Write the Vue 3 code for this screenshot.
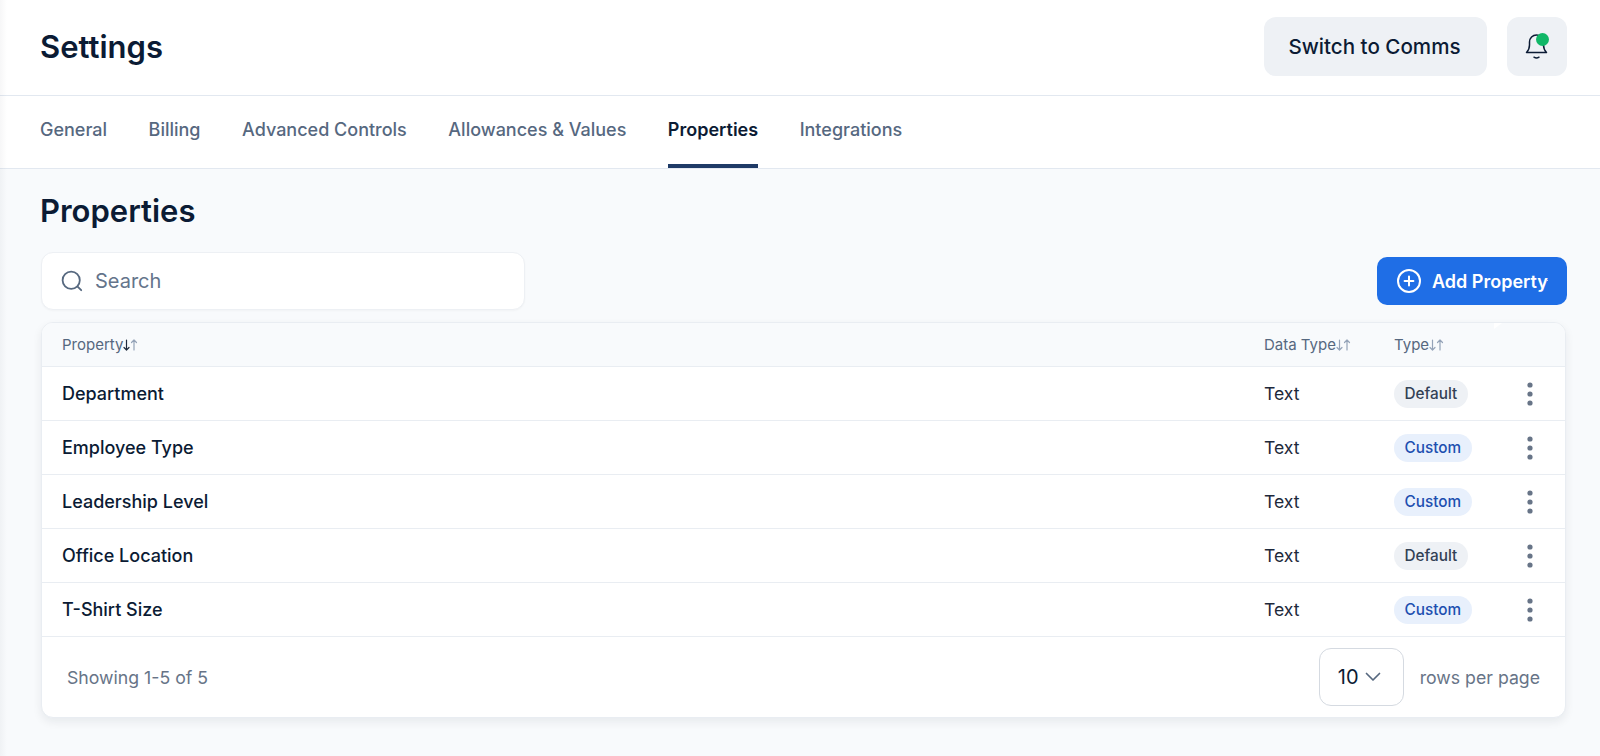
<script setup>
const tabs = ['General', 'Billing', 'Advanced Controls', 'Allowances & Values', 'Properties', 'Integrations']
const rows = [
  { name: 'Department', data: 'Text', type: 'Default' },
  { name: 'Employee Type', data: 'Text', type: 'Custom' },
  { name: 'Leadership Level', data: 'Text', type: 'Custom' },
  { name: 'Office Location', data: 'Text', type: 'Default' },
  { name: 'T-Shirt Size', data: 'Text', type: 'Custom' },
]
const cols = [
  { label: 'Property', cls: 'c-name', active: true },
  { label: 'Data Type', cls: 'c-data' },
  { label: 'Type', cls: 'c-type' },
]
</script>

<template>
  <div class="page">
    <div class="edge"></div>
    <header class="top">
      <h1>Settings</h1>
      <div class="top-actions">
        <button class="btn-soft">Switch to Comms</button>
        <button class="btn-bell" aria-label="Notifications">
          <svg width="24" height="28" viewBox="0 0 24 28" fill="none" stroke="#0b1b34" stroke-width="1.5" stroke-linecap="round" stroke-linejoin="round">
            <path d="M1.5 19.5c2-2 3-4 3-7.5V9a7 7 0 0 1 14 0v3c0 3.5 1 5.5 3 7.5z" />
            <path d="M9 24.2c1.5 1 3.5 1 5 0" />
          </svg>
          <span class="dot"></span>
        </button>
      </div>
    </header>

    <nav class="tabs">
      <a v-for="t in tabs" :key="t" class="tab" :class="{ active: t === 'Properties' }">{{ t }}</a>
    </nav>

    <main class="content">
      <h2>Properties</h2>
      <div class="toolbar">
        <label class="search">
          <svg width="24" height="24" viewBox="0 0 24 24" fill="none" stroke="#56687f" stroke-width="1.8" stroke-linecap="round">
            <circle cx="11.2" cy="11.2" r="8.6" />
            <path d="M17.6 17.6l3.6 3.6" />
          </svg>
          <span>Search</span>
        </label>
        <button class="btn-primary">
          <svg width="26" height="26" viewBox="0 0 26 26" fill="none" stroke="#fff" stroke-width="2" stroke-linecap="round">
            <circle cx="13" cy="13" r="11" />
            <path d="M13 8.6v8.8M8.6 13h8.8" />
          </svg>
          <span>Add Property</span>
          <i class="speck"></i>
        </button>
      </div>

      <section class="card">
        <div class="row head">
          <i class="notch"></i>
          <div v-for="c in cols" :key="c.label" class="cell" :class="c.cls">
            <span class="head-label">{{ c.label }}<svg class="arrows" width="15" height="12" viewBox="0 0 15 12" fill="none" stroke-width="1.2" stroke-linecap="round" stroke-linejoin="round">
              <path :stroke="c.active ? '#1e293b' : '#94a3b8'" d="M3.5 1v10M1 8.5L3.5 11L6 8.5" />
              <path stroke="#94a3b8" d="M11 11V1M8.5 3.5L11 1l2.5 2.5" />
            </svg></span>
          </div>
          <div class="cell c-menu"></div>
        </div>
        <div v-for="r in rows" :key="r.name" class="row body">
          <div class="cell c-name name">{{ r.name }}</div>
          <div class="cell c-data">{{ r.data }}</div>
          <div class="cell c-type">
            <span class="pill" :class="r.type.toLowerCase()">{{ r.type }}</span>
          </div>
          <div class="cell c-menu">
            <svg width="6" height="24" viewBox="0 0 6 24" fill="#677487">
              <circle cx="3" cy="3" r="2.6" /><circle cx="3" cy="12" r="2.6" /><circle cx="3" cy="21" r="2.6" />
            </svg>
          </div>
        </div>
        <footer class="foot">
          <span>Showing 1-5 of 5</span>
          <div class="pager">
            <div class="select">
              <span>10</span>
              <svg width="16" height="10" viewBox="0 0 16 10" fill="none" stroke="#56687f" stroke-width="1.7" stroke-linecap="round" stroke-linejoin="round">
                <path d="M1.5 1.5L8 8l6.5-6.5" />
              </svg>
            </div>
            <span>rows per page</span>
          </div>
        </footer>
      </section>
    </main>
  </div>
</template>

<style>
html, body { margin: 0; background: #f8fafc; }
</style>

<style scoped>
.page {
  position: relative;
  height: 756px;
  overflow: hidden;
  background: #f8fafc;
  font-family: Inter, "Liberation Sans", sans-serif;
  color: #0b1b34;
  box-sizing: border-box;
}
.edge {
  position: absolute;
  left: 0;
  top: 0;
  bottom: 0;
  width: 7px;
  background: linear-gradient(to right, rgba(15, 23, 42, .035), rgba(15, 23, 42, 0));
  pointer-events: none;
}
.top {
  height: 96px;
  padding: 17px 33px 0 40px;
  background: #fff;
  box-sizing: border-box;
  display: flex;
  align-items: flex-start;
  justify-content: space-between;
  border-bottom: 1px solid #e2e8f0;
}
h1 {
  margin: 10px 0 0;
  font-size: 31px;
  line-height: 40px;
  font-weight: 600;
}
.top-actions { display: flex; gap: 20px; }
button { font-family: inherit; border: 0; cursor: pointer; }
.btn-soft {
  width: 223px;
  height: 59px;
  border-radius: 12px;
  background: #eef1f5;
  color: #0b1b34;
  font-size: 20.6px;
  font-weight: 500;
  padding: 0 2px 0 0;
}
.btn-bell {
  position: relative;
  width: 60px;
  height: 59px;
  border-radius: 12px;
  background: #eef1f5;
  padding: 0;
  display: flex;
  align-items: center;
  justify-content: center;
}
.dot {
  position: absolute;
  width: 13px;
  height: 13px;
  border-radius: 50%;
  background: #10b767;
  top: 16px;
  left: 29px;
}
.tabs {
  display: flex;
  gap: 41.5px;
  height: 73px;
  box-sizing: border-box;
  padding: 0 40px;
  background: #fff;
  border-bottom: 1px solid #e2e8f0;
}
.tab {
  font-size: 18px;
  font-weight: 500;
  color: #56687f;
  height: 72px;
  line-height: 68px;
  box-sizing: border-box;
}
.tab.active {
  color: #0b1b34;
  font-weight: 600;
  border-bottom: 4px solid #1e3a66;
}
.content { padding: 0 33px 0 40px; }
h2 {
  margin: 0;
  padding-top: 21px;
  font-size: 31px;
  line-height: 42px;
  font-weight: 600;
}
.toolbar {
  margin-top: 20px;
  display: flex;
  justify-content: space-between;
  align-items: center;
  height: 58px;
}
.search {
  margin-left: 1px;
  width: 484px;
  height: 58px;
  box-sizing: border-box;
  background: #fff;
  border: 1px solid #edf0f4;
  border-radius: 12px;
  display: flex;
  align-items: center;
  gap: 11px;
  padding-left: 18px;
  font-size: 20px;
  color: #64748b;
  box-shadow: 0 1px 2px rgba(15, 23, 42, .03);
}
.btn-primary {
  position: relative;
  width: 190px;
  height: 48px;
  border-radius: 10px;
  background: #1f6ee6;
  color: #fff;
  font-size: 18px;
  font-weight: 600;
  display: flex;
  align-items: center;
  gap: 10px;
  padding: 0 0 0 19px;
}
.speck {
  position: absolute;
  left: 170px;
  top: 23px;
  width: 1px;
  height: 1px;
  background: rgba(255, 255, 255, .7);
}
.card {
  margin: 12px 1px 0 1px;
  background: #fff;
  border: 1px solid #e9edf2;
  border-radius: 12px;
  overflow: hidden;
  box-shadow: 0 4px 10px rgba(15, 23, 42, .07);
}
.row { display: flex; align-items: center; }
.head {
  position: relative;
  height: 44px;
  background: #f8fafc;
  border-bottom: 1px solid #e9edf2;
  font-size: 15px;
  color: #56687f;
  box-sizing: border-box;
}
.notch {
  position: absolute;
  left: 1452px;
  top: 0;
  width: 8px;
  height: 6px;
  background: #fff;
  clip-path: polygon(0 0, 100% 0, 0 100%);
}
.head-label { display: inline-flex; align-items: center; }
.arrows { flex: none; }
.body {
  height: 54px;
  box-sizing: border-box;
  border-bottom: 1px solid #e9edf2;
  font-size: 17.6px;
  color: #1e293b;
}
.cell { flex: none; box-sizing: border-box; }
.c-name { width: 1222px; padding-left: 20px; }
.c-data { width: 130px; }
.c-type { width: 121px; }
.c-menu { width: 50px; display: flex; justify-content: center; padding-right: 20px; }
.name { font-size: 18px; font-weight: 500; color: #0b1b34; }
.pill {
  display: inline-block;
  height: 28px;
  line-height: 28px;
  padding: 0 10.5px;
  border-radius: 14px;
  font-size: 15.3px;
  font-weight: 500;
}
.pill.default { background: #eef1f5; color: #334155; }
.pill.custom { background: #e8f0fc; color: #1d4fb0; }
.foot {
  height: 80px;
  box-sizing: border-box;
  padding: 0 25px;
  display: flex;
  align-items: center;
  justify-content: space-between;
  font-size: 17.7px;
  color: #677487;
}
.pager { display: flex; align-items: center; gap: 16px; }
.select {
  width: 85px;
  height: 58px;
  box-sizing: border-box;
  border: 1px solid #d5dae1;
  border-radius: 12px;
  display: flex;
  align-items: center;
  justify-content: center;
  gap: 6px;
  padding-right: 4px;
  font-size: 20px;
  color: #0b1b34;
}
</style>
